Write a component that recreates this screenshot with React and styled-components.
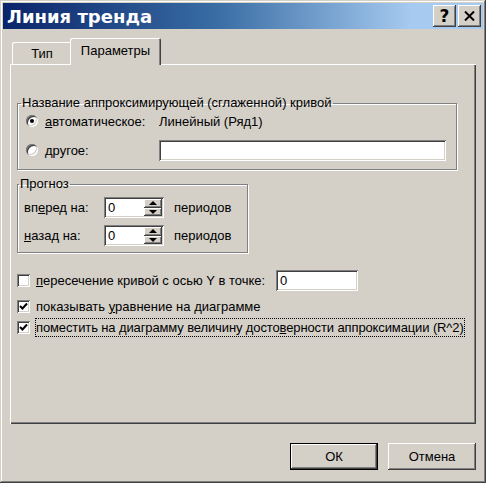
import React from "react";
import styled, { createGlobalStyle, css } from "styled-components";

const GlobalStyle = createGlobalStyle`
  html, body {
    margin: 0;
    padding: 0;
    background: #d4d0c8;
  }
  body {
    font-family: "Liberation Sans", Arial, sans-serif;
    font-size: 13px;
    color: #000;
  }
`;

const raised = css`
  background: #d4d0c8;
  box-shadow: inset -1px -1px #404040, inset 1px 1px #ffffff,
    inset -2px -2px #808080, inset 2px 2px #d4d0c8;
`;

const sunken = css`
  background: #ffffff;
  box-shadow: inset 1px 1px #808080, inset -1px -1px #ffffff,
    inset 2px 2px #404040, inset -2px -2px #d4d0c8;
`;

const Window = styled.div`
  width: 486px;
  height: 483px;
  box-sizing: border-box;
  padding: 3px;
  display: flex;
  flex-direction: column;
  background: #d4d0c8;
  box-shadow: inset -1px -1px #404040, inset 1px 1px #d4d0c8,
    inset -2px -2px #808080, inset 2px 2px #ffffff;
`;

const TitleBar = styled.div`
  height: 26px;
  display: flex;
  align-items: center;
  gap: 2px;
  padding: 0 2px 0 2px;
  background: linear-gradient(90deg, #0a246a 0%, #3a6ea5 45%, #a6caf0 85%);
`;

const Title = styled.div`
  flex: 1;
  padding-left: 2px;
  color: #fff;
  font-family: "DejaVu Sans", Tahoma, sans-serif;
  font-size: 18px;
  font-weight: bold;
`;

const TitleButton = styled.div`
  ${raised};
  width: 23px;
  height: 22px;
  display: flex;
  align-items: center;
  justify-content: center;
  font-family: "DejaVu Sans", Tahoma, sans-serif;
  font-size: 17px;
  font-weight: bold;
  line-height: 1;
`;

const Body = styled.div`
  flex: 1;
  display: flex;
  flex-direction: column;
  padding: 9px 7px 0;
`;

const TabRow = styled.div`
  display: flex;
  align-items: flex-end;
  height: 26px;
  padding-left: 2px;
`;

const Tab = styled.div`
  position: relative;
  box-sizing: border-box;
  width: ${(p) => p.$width}px;
  height: ${(p) => (p.$active ? 27 : 22)}px;
  margin-left: ${(p) => (p.$active ? -2 : 0)}px;
  margin-bottom: ${(p) => (p.$active ? -1 : 0)}px;
  z-index: ${(p) => (p.$active ? 1 : 0)};
  display: flex;
  align-items: center;
  justify-content: center;
  padding-bottom: ${(p) => (p.$active ? 3 : 0)}px;
  background: #d4d0c8;
  border-radius: 2px 2px 0 0;
  box-shadow: inset 1px 1px #ffffff, inset -1px 0 #404040,
    inset -2px 0 #808080;
`;

const Panel = styled.div`
  height: 360px;
  box-sizing: border-box;
  display: flex;
  flex-direction: column;
  padding: 1px 0 0 7px;
  box-shadow: inset 1px 1px #ffffff, inset -1px -1px #404040,
    inset -2px -2px #808080;
`;

const Group = styled.fieldset`
  box-sizing: border-box;
  width: ${(p) => p.$width}px;
  margin: ${(p) => p.$top}px 0 0 0;
  padding: ${(p) => p.$pad};
  min-width: 0;
  border: 1px solid #808080;
  box-shadow: 1px 1px #ffffff, inset 1px 1px #ffffff;
`;

const Legend = styled.legend`
  padding: 0 1px;
  margin-left: -5px;
  line-height: 14px;
`;

const NameGrid = styled.div`
  display: grid;
  grid-template-columns: 133px 1fr;
  grid-auto-rows: 22px;
  row-gap: 7px;
  align-items: center;
`;

const Choice = styled.div`
  display: flex;
  align-items: center;
  gap: 7px;
`;

const Radio = styled.span`
  position: relative;
  width: 12px;
  height: 12px;
  border-radius: 50%;
  background: #fff;
  box-shadow: inset 1px 1px #808080, inset -1px -1px #ffffff,
    inset 2px 2px #404040, inset -2px -2px #d4d0c8;

  &::after {
    content: "";
    display: ${(p) => (p.$checked ? "block" : "none")};
    position: absolute;
    left: 4px;
    top: 4px;
    width: 4px;
    height: 4px;
    border-radius: 50%;
    background: #000;
  }
`;

const TextField = styled.div`
  ${sunken};
  box-sizing: border-box;
  width: ${(p) => p.$width}px;
  height: 21px;
  padding: 3px 0 0 4px;
  line-height: 15px;
`;

const ForecastGrid = styled.div`
  display: grid;
  grid-template-columns: 70px 60px auto;
  grid-auto-rows: 21px;
  row-gap: 7px;
  column-gap: 10px;
  align-items: center;
`;

const Spin = styled.div`
  ${sunken};
  box-sizing: border-box;
  height: 21px;
  display: flex;
  padding: 2px;
`;

const SpinValue = styled.div`
  flex: 1;
  padding: 1px 0 0 2px;
  line-height: 15px;
`;

const SpinButtons = styled.div`
  display: flex;
  flex-direction: column;
  width: 18px;
`;

const SpinButton = styled.div`
  ${raised};
  flex: 1;
  display: flex;
  align-items: center;
  justify-content: center;
`;

const Arrow = styled.span`
  width: 0;
  height: 0;
  border-left: 4px solid transparent;
  border-right: 4px solid transparent;
  ${(p) =>
    p.$up
      ? "border-bottom: 4px solid #000;"
      : "border-top: 4px solid #000;"}
`;

const Checks = styled.div`
  display: flex;
  flex-direction: column;
  margin-top: 17px;
`;

const CheckRow = styled.div`
  height: ${(p) => p.$h}px;
  margin-top: ${(p) => p.$gap || 0}px;
  display: flex;
  align-items: center;
  white-space: nowrap;
`;

const Box = styled.span`
  ${sunken};
  width: 13px;
  height: 13px;
  flex: none;
  display: flex;
  align-items: center;
  justify-content: center;
  margin-right: 5px;
`;

const CheckLabel = styled.span`
  padding: 1px 0;
  letter-spacing: ${(p) => p.$tight || 0}px;
  border: 1px dotted ${(p) => (p.$focus ? "#000" : "transparent")};
`;

const Footer = styled.div`
  display: flex;
  justify-content: flex-end;
  gap: 10px;
  margin-top: 19px;
`;

const Button = styled.div`
  ${raised};
  box-sizing: border-box;
  width: 88px;
  height: 27px;
  display: flex;
  align-items: center;
  justify-content: center;
  ${(p) =>
    p.$default &&
    css`
      border: 1px solid #000;
    `}
`;

const Check = () => (
  <svg width="9" height="9" viewBox="0 0 9 9">
    <polyline
      points="1,4 3.5,6.5 8,1.5"
      fill="none"
      stroke="#000"
      strokeWidth="2"
    />
  </svg>
);

const CloseIcon = () => (
  <svg width="11" height="10" viewBox="0 0 11 10">
    <path d="M1 0.5 L10 9.5 M10 0.5 L1 9.5" stroke="#000" strokeWidth="2" />
  </svg>
);

const SpinBox = ({ value }) => (
  <Spin>
    <SpinValue>{value}</SpinValue>
    <SpinButtons>
      <SpinButton>
        <Arrow $up />
      </SpinButton>
      <SpinButton>
        <Arrow />
      </SpinButton>
    </SpinButtons>
  </Spin>
);

export default function App() {
  return (
    <>
      <GlobalStyle />
      <Window>
        <TitleBar>
          <Title>Линия тренда</Title>
          <TitleButton>?</TitleButton>
          <TitleButton>
            <CloseIcon />
          </TitleButton>
        </TitleBar>
        <Body>
          <TabRow>
            <Tab $width={60}>Тип</Tab>
            <Tab $width={91} $active>
              Параметры
            </Tab>
          </TabRow>
          <Panel>
            <Group $width={440} $top={31} $pad="0 10px 8px 8px">
              <Legend>Название аппроксимирующей (сглаженной) кривой</Legend>
              <NameGrid>
                <Choice>
                  <Radio $checked />
                  <span>
                    <u>а</u>втоматическое:
                  </span>
                </Choice>
                <span>Линейный (Ряд1)</span>
                <Choice>
                  <Radio />
                  <span>
                    <u>д</u>ругое:
                  </span>
                </Choice>
                <TextField />
              </NameGrid>
            </Group>
            <Group $width={231} $top={7} $pad="6px 6px 6px 6px">
              <Legend>Прогноз</Legend>
              <ForecastGrid>
                <span>
                  вп<u>е</u>ред на:
                </span>
                <SpinBox value="0" />
                <span>периодов</span>
                <span>
                  <u>н</u>азад на:
                </span>
                <SpinBox value="0" />
                <span>периодов</span>
              </ForecastGrid>
            </Group>
            <Checks>
              <CheckRow $h={21}>
                <Box />
                <CheckLabel>
                  <u>п</u>ересечение кривой с осью Y в точке:
                </CheckLabel>
                <TextField $width={82} style={{ marginLeft: 10 }}>
                  0
                </TextField>
              </CheckRow>
              <CheckRow $h={22} $gap={4}>
                <Box>
                  <Check />
                </Box>
                <CheckLabel>
                  показывать <u>у</u>равнение на диаграмме
                </CheckLabel>
              </CheckRow>
              <CheckRow $h={20} $gap={0}>
                <Box>
                  <Check />
                </Box>
                <CheckLabel $focus $tight={-0.12}>
                  поместить на диаграмму величину досто<u>в</u>ерности
                  аппроксимации (R^2)
                </CheckLabel>
              </CheckRow>
            </Checks>
          </Panel>
          <Footer>
            <Button $default>ОК</Button>
            <Button>Отмена</Button>
          </Footer>
        </Body>
      </Window>
    </>
  );
}
